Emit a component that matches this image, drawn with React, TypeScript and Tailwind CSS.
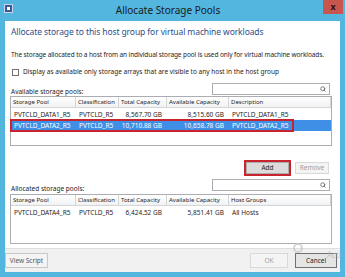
import { Search } from "lucide-react";

const available = [
  ["PVTCLD_DATA1_R5", "PVTCLD_R5", "8,567.70 GB", "8,515.60 GB", "PVTCLD_DATA1_R5"],
  ["PVTCLD_DATA2_R5", "PVTCLD_R5", "10,710.88 GB", "10,658.78 GB", "PVTCLD_DATA2_R5"],
];

const allocated = [["PVTCLD_DATA4_R5", "PVTCLD_R5", "6,424.52 GB", "5,851.41 GB", "All Hosts"]];

const cols = ["w-[65px]", "w-[43px]", "w-[48px]", "w-[62px]", "flex-1"];

function SearchBox() {
  return (
    <div className="w-[118px] h-[12px] border border-[#abadb3] bg-white flex items-center justify-end pr-[3px]">
      <Search className="w-[6px] h-[6px] text-[#555]" strokeWidth={3} />
    </div>
  );
}

function Grid({ heads, rows, selected }: { heads: string[]; rows: string[][]; selected?: number }) {
  return (
    <div className="mx-[5px] mr-[8px] h-[50px] border border-[#abadb3] bg-white">
      <div className="flex h-[11px] border-b border-[#d5d5d5] bg-gradient-to-b from-white to-[#f1f2f4] text-[6px]">
        {heads.map((h, i) => (
          <div key={h} className={`${cols[i]} border-r border-[#d5d5d5] pl-[2px] leading-[10px] whitespace-nowrap overflow-hidden`}>
            {h}
          </div>
        ))}
      </div>
      <div className="pt-[1px]">
        {rows.map((r, ri) => (
          <div key={ri} className={`flex h-[11px] leading-[11px] ${ri === selected ? "bg-[#3f8fe6] text-white" : ""}`}>
            <div
              className={`flex w-[282px] ${ri === selected ? "outline-[2px] outline outline-[#c8242e] -outline-offset-1" : ""}`}
            >
              {r.map((c, i) => (
                <div
                  key={i}
                  className={`${i === 4 ? "w-[64px]" : cols[i]} ${i === 2 || i === 3 ? "text-right pr-[5px]" : "pl-[3px]"} truncate`}
                >
                  {c}
                </div>
              ))}
            </div>
          </div>
        ))}
      </div>
    </div>
  );
}

export default function App() {
  return (
    <div className="w-[345px] h-[277px] bg-[#52b6df] flex flex-col px-[5px] pb-[5px] text-[#1e1e1e] font-['Noto_Sans',sans-serif] text-[6.5px] relative overflow-hidden">
      <div className="h-[21px] flex items-start">
        <div className="w-[9px] h-[9px] mt-[4px] -ml-[1px] bg-[#3a5b9c] border border-[#c9d6ea] flex items-center justify-center">
          <div className="w-[3px] h-[3px] bg-white" />
        </div>
        <div className="flex-1 text-center text-[10px] leading-[21px] text-[#1a1a1a]">Allocate Storage Pools</div>
        <div className="w-[20px] h-[14px] -mr-[3px] bg-[#c9554f] flex items-center justify-center text-[9px] font-bold text-[#3a1010]">
          x
        </div>
      </div>

      <div className="flex-1 bg-white flex flex-col">
        <div className="pl-[6px] pt-[5px] text-[8.5px] tracking-[-0.1px] leading-[12px] text-[#2d4e8c]">
          Allocate storage to this host group for virtual machine workloads
        </div>
        <div className="pl-[6px] mt-[13px] leading-[8px] tracking-[-0.1px]">
          The storage allocated to a host from an individual storage pool is used only for virtual machine workloads.
        </div>
        <div className="pl-[7px] mt-[9px] flex items-center gap-[4px] leading-[8px]">
          <div className="w-[7px] h-[7px] border border-[#707070] bg-white" />
          <span>Display as available only storage arrays that are visible to any host in the host group</span>
        </div>

        <div className="mt-[7px] flex items-end justify-between pl-[6px] pr-[10px] h-[12px]">
          <span className="leading-[8px] -mb-[1px]">Available storage pools:</span>
          <SearchBox />
        </div>
        <div className="mt-[1px]">
          <Grid
            heads={["Storage Pool", "Classification", "Total Capacity", "Available Capacity", "Description"]}
            rows={available}
            selected={1}
          />
        </div>

        <div className="mt-[14px] flex justify-end gap-[4px] pr-[11px] items-center">
          <div className="border-2 border-[#c8242e] p-0">
            <div className="w-[43px] h-[12px] bg-[#dcdcdc] border border-[#adadad] text-center leading-[10px]">Add</div>
          </div>
          <div className="w-[34px] h-[12px] bg-[#f4f4f4] border border-[#d9d9d9] text-center leading-[10px] text-[#a0a0a0]">
            Remove
          </div>
        </div>

        <div className="mt-[3px] flex items-end justify-between pl-[6px] pr-[10px] h-[12px]">
          <span className="leading-[8px] -mb-[2px]">Allocated storage pools:</span>
          <SearchBox />
        </div>
        <div className="mt-[3px]">
          <Grid
            heads={["Storage Pool", "Classification", "Total Capacity", "Available Capacity", "Host Groups"]}
            rows={allocated}
          />
        </div>
      </div>

      <div className="h-[24px] bg-[#f0f0f0] border-t border-[#dfdfdf] flex items-center justify-between pl-[0px] pr-[3px]">
        <div className="w-[43px] h-[15px] bg-[#f4f4f4] border border-[#c7c7c7] text-center leading-[13px] text-[#555]">
          View Script
        </div>
        <div className="flex gap-[7px]">
          <div className="w-[38px] h-[15px] bg-[#f4f4f4] border border-[#d9d9d9] text-center leading-[13px] text-[#a0a0a0]">
            OK
          </div>
          <div className="w-[42px] h-[15px] bg-[#e5e5e5] border border-[#707070] text-center leading-[13px]">
            Cancel
          </div>
        </div>
      </div>

      <div className="absolute left-[327px] top-[249px] text-[8px] text-[#b5b5b5]/70 pointer-events-none">Acti</div>
      <div className="absolute left-[293px] top-[243px] w-[10px] h-[10px] rounded-full border-2 border-[#c5c5c5]/70 pointer-events-none" />
    </div>
  );
}
